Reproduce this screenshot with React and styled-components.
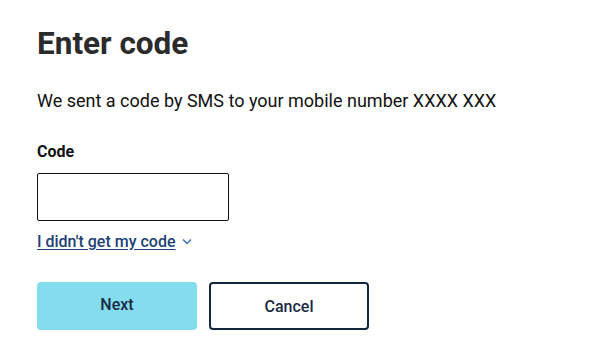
import styled, { createGlobalStyle } from "styled-components";

const GlobalStyle = createGlobalStyle`
  body {
    margin: 0;
    background: #fff;
    font-family: Roboto, "Liberation Sans", sans-serif;
  }
`;

const Page = styled.div`
  padding: 26px 37px;
  display: flex;
  flex-direction: column;
  align-items: flex-start;
`;

const Title = styled.h1`
  margin: 0;
  font-size: 31.5px;
  font-weight: 700;
  color: #2b2b2b;
  line-height: 36px;
`;

const Lead = styled.p`
  margin: 27px 0 0;
  font-size: 18px;
  color: #111;
  line-height: 24px;
`;

const Label = styled.label`
  margin-top: 29px;
  font-size: 16px;
  font-weight: 700;
  color: #111;
  line-height: 19px;
`;

const Input = styled.input`
  margin-top: 12px;
  width: 192px;
  height: 48px;
  box-sizing: border-box;
  border: 1px solid #111;
  border-radius: 2px;
  padding: 0 10px;
  font: inherit;
`;

const Toggle = styled.button`
  margin-top: 11px;
  padding: 0;
  border: none;
  background: none;
  display: flex;
  align-items: center;
  gap: 7px;
  font-family: inherit;
  font-size: 16px;
  line-height: 19px;
  font-weight: 500;
  color: #1d4273;
  cursor: pointer;
  span {
    text-decoration: underline;
    text-underline-offset: 2px;
  }
`;

const Actions = styled.div`
  margin-top: 31px;
  display: flex;
  gap: 12px;
`;

const Button = styled.button`
  width: 160px;
  height: 48px;
  box-sizing: border-box;
  border-radius: 4px;
  font-family: inherit;
  font-size: 16px;
  font-weight: 500;
  color: #1a2a42;
  cursor: pointer;
  background: ${(p) => (p.$primary ? "#84dcef" : "#fff")};
  border: ${(p) => (p.$primary ? "none" : "2px solid #142640")};
  padding: ${(p) => (p.$primary ? "0 0 3px" : "0")};
`;

export default function App() {
  return (
    <>
      <GlobalStyle />
      <Page>
        <Title>Enter code</Title>
        <Lead>We sent a code by SMS to your mobile number XXXX XXX</Lead>
        <Label htmlFor="code">Code</Label>
        <Input id="code" />
        <Toggle>
          <span>I didn't get my code</span>
          <svg width="10" height="7" viewBox="0 0 10 7" fill="none">
            <path d="M1 1.5l4 4 4-4" stroke="#3b6fb0" strokeWidth="1.4" />
          </svg>
        </Toggle>
        <Actions>
          <Button $primary>Next</Button>
          <Button>Cancel</Button>
        </Actions>
      </Page>
    </>
  );
}
